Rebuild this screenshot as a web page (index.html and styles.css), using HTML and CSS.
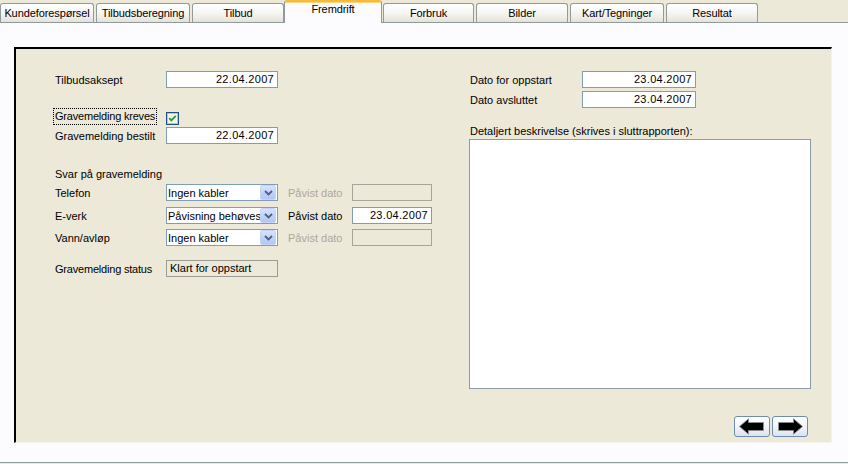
FILE: index.html
```html
<!DOCTYPE html>
<html lang="no">
<head>
<meta charset="utf-8">
<title>Fremdrift</title>
<link rel="stylesheet" href="styles.css">
</head>
<body>
<div class="tabs">
  <div class="tab t-k">Kundeforespørsel</div>
  <div class="tab t-tb">Tilbudsberegning</div>
  <div class="tab t-t">Tilbud</div>
  <div class="tab active">Fremdrift</div>
  <div class="tab t-f">Forbruk</div>
  <div class="tab t-b">Bilder</div>
  <div class="tab t-kt">Kart/Tegninger</div>
  <div class="tab t-r">Resultat</div>
</div>
<div class="page">
  <div class="panel">
    <div class="left">
      <div class="row">
        <span class="lbl">Tilbudsaksept</span>
        <span class="field date">22.04.2007</span>
      </div>
      <div class="row r-check">
        <span class="lbl focus">Gravemelding kreves</span>
        <svg class="check" width="13" height="13" viewBox="0 0 13 13">
          <rect x="0.5" y="0.5" width="12" height="12" fill="#F4F3EE" stroke="#1C5180"/>
          <rect x="1.5" y="1.5" width="10" height="10" fill="none" stroke="#F8C040"/>
          <path d="M3.2 6.2 L5.3 8.4 L9.8 3.8" fill="none" stroke="#21A121" stroke-width="1.8"/>
        </svg>
      </div>
      <div class="row r-tight">
        <span class="lbl">Gravemelding bestilt</span>
        <span class="field date">22.04.2007</span>
      </div>
      <div class="row r-head">
        <span class="lbl wide">Svar på gravemelding</span>
      </div>
      <div class="row r-tight">
        <span class="lbl">Telefon</span>
        <div class="select"><span class="txt">Ingen kabler</span><span class="btn"><svg width="9" height="6" viewBox="0 0 9 6"><path d="M1 1 L4.5 4.5 L8 1" fill="none" stroke="#4D6185" stroke-width="1.8"/></svg></span></div>
        <span class="lbl2 disabled">Påvist dato</span>
        <span class="field small off"></span>
      </div>
      <div class="row r-sel">
        <span class="lbl">E-verk</span>
        <div class="select"><span class="txt">Påvisning behøves</span><span class="btn"><svg width="9" height="6" viewBox="0 0 9 6"><path d="M1 1 L4.5 4.5 L8 1" fill="none" stroke="#4D6185" stroke-width="1.8"/></svg></span></div>
        <span class="lbl2">Påvist dato</span>
        <span class="field small date">23.04.2007</span>
      </div>
      <div class="row r-sel2">
        <span class="lbl">Vann/avløp</span>
        <div class="select"><span class="txt">Ingen kabler</span><span class="btn"><svg width="9" height="6" viewBox="0 0 9 6"><path d="M1 1 L4.5 4.5 L8 1" fill="none" stroke="#4D6185" stroke-width="1.8"/></svg></span></div>
        <span class="lbl2 disabled">Påvist dato</span>
        <span class="field small off"></span>
      </div>
      <div class="row r-status">
        <span class="lbl narrow">Gravemelding status</span>
        <span class="field status">Klart for oppstart</span>
      </div>
    </div>
    <div class="right">
      <div class="row">
        <span class="rlbl">Dato for oppstart</span>
        <span class="field rfield date">23.04.2007</span>
      </div>
      <div class="row r-r2">
        <span class="rlbl">Dato avsluttet</span>
        <span class="field rfield date">23.04.2007</span>
      </div>
      <div class="desc-lbl">Detaljert beskrivelse (skrives i sluttrapporten):</div>
      <div class="desc"></div>
      <div class="nav">
        <button class="navbtn" type="button" aria-label="Forrige">
          <svg width="28" height="17" viewBox="0 0 28 17"><polygon points="1.5,8.5 10.5,0.8 10.5,4.5 25.5,4.5 25.5,12.5 10.5,12.5 10.5,16.2" fill="#000" stroke="#8C8C8C" stroke-width="1" stroke-linejoin="miter"/></svg>
        </button>
        <button class="navbtn" type="button" aria-label="Neste">
          <svg width="28" height="17" viewBox="0 0 28 17"><polygon points="26.5,8.5 17.5,0.8 17.5,4.5 2.5,4.5 2.5,12.5 17.5,12.5 17.5,16.2" fill="#000" stroke="#8C8C8C" stroke-width="1" stroke-linejoin="miter"/></svg>
        </button>
      </div>
    </div>
  </div>
</div>
</body>
</html>
```

FILE: styles.css
```css
html, body {
  margin: 0;
  padding: 0;
}
body {
  width: 848px;
  height: 464px;
  overflow: hidden;
  background: #ECE9D8;
  font-family: "Liberation Sans", Arial, sans-serif;
  font-size: 11px;
  color: #000;
}

/* Tabs */
.tabs {
  display: flex;
  align-items: flex-end;
  gap: 2px;
  height: 22px;
}
.tab {
  box-sizing: border-box;
  height: 19px;
  width: 92px;
  border: 1px solid #919B9C;
  border-bottom: none;
  border-radius: 3px 3px 0 0;
  background: linear-gradient(#FFFFFF, #F5F4F0 55%, #E4E1D8);
  display: flex;
  align-items: center;
  justify-content: center;
  padding-bottom: 1px;
  white-space: nowrap;
  letter-spacing: -0.1px;
}
.t-k, .t-tb, .t-kt { width: 94px; }
.t-t, .t-b, .t-r { width: 92px; }
.t-f { width: 91px; }
.tab.active {
  width: 98px;
  height: 23px;
  margin-left: -2px;
  margin-right: -1px;
  margin-bottom: -1px;
  position: relative;
  z-index: 1;
  background: #FCFCFE;
  border-top: 2px solid #F6B93C;
  box-shadow: inset 0 1px 0 #FFD778;
  align-items: flex-start;
  padding-top: 1px;
  padding-bottom: 0;
}

/* Page */
.page {
  box-sizing: border-box;
  height: 441px;
  background: #FCFCFE;
  border-top: 1px solid #919B9C;
  border-bottom: 1px solid #919B9C;
  padding-top: 24px;
}
.panel {
  box-sizing: border-box;
  margin-left: 14px;
  width: 818px;
  height: 396px;
  background: #ECE9D8;
  border-top: 2px solid #000;
  border-left: 2px solid #000;
  border-right: 1px solid #F4F3EE;
  border-bottom: 1px solid #F4F3EE;
  padding: 22px 0 0 39px;
  display: flex;
}

.left {
  width: 377px;
  display: flex;
  flex-direction: column;
}
.right {
  width: 342px;
  margin-left: 37px;
  display: flex;
  flex-direction: column;
}

.row {
  display: flex;
  align-items: center;
  height: 17px;
}
.r-check { margin-top: 20px; }
.r-tight { margin-top: 2px; }
.r-head { margin-top: 21px; }
.r-sel { margin-top: 6px; }
.r-sel2 { margin-top: 5px; }
.r-status { margin-top: 14px; }
.r-r2 { margin-top: 3px; }

.lbl {
  width: 111px;
  white-space: nowrap;
}
.lbl.wide { width: auto; }
.lbl.narrow { letter-spacing: -0.2px; }
.lbl.focus {
  box-sizing: border-box;
  width: 104px;
  height: 17px;
  margin-left: -2px;
  padding-left: 1px;
  border: 1px dotted #000;
  line-height: 15px;
  letter-spacing: -0.2px;
}
.check {
  margin-left: 9px;
  margin-top: 3px;
}

.field {
  box-sizing: border-box;
  width: 112px;
  height: 17px;
  border: 1px solid #7F9DB9;
  background: #FFFFFF;
  line-height: 15px;
  white-space: nowrap;
  overflow: hidden;
}
.field.date {
  text-align: right;
  padding-right: 3px;
  letter-spacing: 0.3px;
}
.field.small {
  width: 80px;
}
.field.off {
  background: #ECE9D8;
  border-color: #A5A59C;
}
.field.status {
  background: #ECE9D8;
  border-color: #9C9C94;
  padding-left: 3px;
}

.lbl2 {
  width: 64px;
  margin-left: 10px;
  white-space: nowrap;
}
.disabled { color: #ACA899; }

.select {
  box-sizing: border-box;
  width: 112px;
  height: 17px;
  border: 1px solid #7F9DB9;
  background: #FFFFFF;
  display: flex;
  align-items: center;
  padding: 0 1px 0 1px;
}
.select .txt {
  flex: 1;
  white-space: nowrap;
  overflow: hidden;
}
.select .btn {
  box-sizing: border-box;
  width: 16px;
  height: 15px;
  border: 1px solid #C3D3FD;
  border-radius: 2px;
  background: linear-gradient(#D8E3FC, #BFD0F6 60%, #B4C7F4);
  display: flex;
  align-items: center;
  justify-content: center;
}

.rlbl {
  width: 112px;
  padding-left: 1px;
  white-space: nowrap;
}
.field.rfield { width: 114px; }

.desc-lbl {
  margin-top: 17px;
  height: 13px;
  line-height: 13px;
  padding-left: 1px;
  white-space: nowrap;
}
.desc {
  box-sizing: border-box;
  margin-top: 1px;
  width: 342px;
  height: 250px;
  background: #FFFFFF;
  border: 1px solid #8E9AA8;
}

.nav {
  display: flex;
  justify-content: flex-end;
  gap: 2px;
  margin-top: 27px;
  padding-right: 3px;
}
.navbtn {
  box-sizing: border-box;
  width: 36px;
  height: 21px;
  padding: 0;
  border: 1px solid #6E8BB0;
  border-radius: 3px;
  background: linear-gradient(#FFFFFF, #F1F4FA 50%, #DCE3EF);
  display: flex;
  align-items: center;
  justify-content: center;
}
.navbtn svg { display: block; }
```
